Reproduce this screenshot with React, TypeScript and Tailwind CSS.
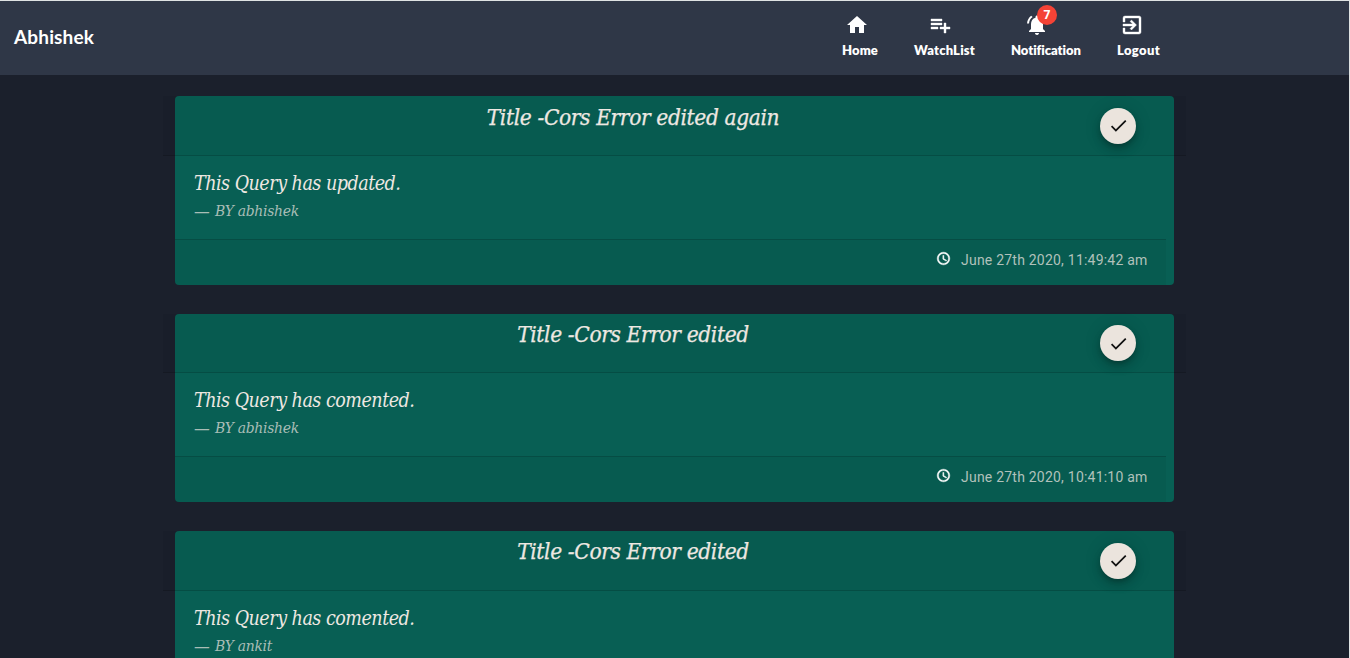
import type { ReactNode } from "react";
import {
  MdAccessTime,
  MdDone,
  MdExitToApp,
  MdHome,
  MdNotificationsActive,
  MdPlaylistAdd,
} from "react-icons/md";

type Query = { id: number; title: string; text: string; author: string; date?: string };

const queries: Query[] = [
  { id: 1, title: "Title -Cors Error edited again", text: "This Query has updated.", author: "abhishek", date: "June 27th 2020, 11:49:42 am" },
  { id: 2, title: "Title -Cors Error edited", text: "This Query has comented.", author: "abhishek", date: "June 27th 2020, 10:41:10 am" },
  { id: 3, title: "Title -Cors Error edited", text: "This Query has comented.", author: "ankit" },
];

function NavItem({ label, className, iconClass, children }: { label: string; className: string; iconClass: string; children: ReactNode }) {
  return (
    <a className={`flex flex-col whitespace-nowrap ${className}`}>
      <span className={`flex h-6 ${iconClass}`}>{children}</span>
      <span className="mt-[2.6px] text-[13px] leading-5 font-extrabold">{label}</span>
    </a>
  );
}

function Navbar() {
  return (
    <header className="flex h-[75px] border-t border-[#dfe3e3] bg-[#2f3747] font-['Lato',sans-serif] text-white">
      <div className="w-[842px] pt-[22px] pl-[14px] text-[19px] leading-7 font-bold tracking-[0.15px]">Abhishek</div>
      <nav className="flex pt-[12.4px]">
        <NavItem label="Home" className="w-[72px] tracking-[0.1px]" iconClass="pl-[3px]">
          <MdHome size={24} />
        </NavItem>
        <NavItem label="WatchList" className="w-[97px] tracking-[0.2px]" iconClass="pl-[13.5px]">
          <MdPlaylistAdd size={24} stroke="currentColor" strokeWidth={0.4} className="[&_path[fill=none]]:stroke-none" />
        </NavItem>
        <NavItem label="Notification" className="w-[106px] tracking-[-0.05px]" iconClass="pl-[14px]">
          <span className="relative">
            <MdNotificationsActive size={24} />
            <span className="absolute -top-[8.4px] left-[12px] flex size-5 items-center justify-center rounded-full bg-[#f44336] font-['Open_Sans',sans-serif] text-[12px] leading-none font-bold">
              7
            </span>
          </span>
        </NavItem>
        <NavItem label="Logout" className="w-[60px] tracking-[0.35px]" iconClass="pl-[3px]">
          <MdExitToApp size={24} stroke="currentColor" strokeWidth={0.4} className="[&_path[fill=none]]:stroke-none" />
        </NavItem>
      </nav>
    </header>
  );
}

function QueryCard({ title, text, author, date }: Query) {
  return (
    <article className="mb-[28.9px] h-[188.5px] w-[999px] shrink-0 rounded-[4px] bg-[#085f54] font-['DejaVu_Serif_Condensed','DejaVu_Serif',serif]">
      <div className="-mx-3 flex h-[59.7px] border-b border-black/15 bg-black/[0.04] pl-3">
        <h2 className="w-[916px] pt-[5.4px] text-center text-[22.5px] leading-[30px] text-[#eee8e2] italic [-webkit-text-stroke:0.25px_#eee8e2]">
          <span className="tracking-[-0.38px]">{title}</span>
        </h2>
        <button className="mt-[11.6px] ml-[9px] flex size-9 items-center justify-center rounded-full bg-[#ebe4dd] text-[#111] shadow-[0_3px_5px_-1px_rgba(0,0,0,0.2),0_6px_10px_0_rgba(0,0,0,0.14),0_1px_18px_0_rgba(0,0,0,0.12)]">
          <MdDone size={21} />
        </button>
      </div>
      <div className="h-[82.9px] pt-[13.2px] pl-[19px] italic">
        <p className="text-[19.5px] leading-[30px] tracking-[-0.5px] text-[#eee8e2]">{text}</p>
        <p className="flex h-[25px] items-center text-[15.5px] leading-[25px] tracking-[-0.3px] text-[#a9bdb6]">
          <span className="w-[21px] text-[17.5px]">—</span>BY {author}
        </p>
      </div>
      {date && (
        <div className="flex h-[45.9px] w-[991px] rounded-bl-[4px] border-t border-black/15 bg-black/[0.04] pl-[761px]">
          <MdAccessTime size={15} stroke="currentColor" strokeWidth={0.8} className="mt-[11px] text-white [&_path[fill=none]]:stroke-none" />
          <span className="ml-[10px] pt-[10px] font-['Roboto',sans-serif] text-[14px] leading-5 tracking-[0.22px] whitespace-nowrap text-[#b1c1bb]">{date}</span>
        </div>
      )}
    </article>
  );
}

export default function App() {
  return (
    <div className="h-[658px] w-full overflow-hidden border-r border-[#dfe3e3] bg-[#1b202c]">
      <Navbar />
      <main className="flex flex-col items-start pt-[21.2px] pl-[175px]">
        {queries.map((q) => (
          <QueryCard key={q.id} {...q} />
        ))}
      </main>
    </div>
  );
}
